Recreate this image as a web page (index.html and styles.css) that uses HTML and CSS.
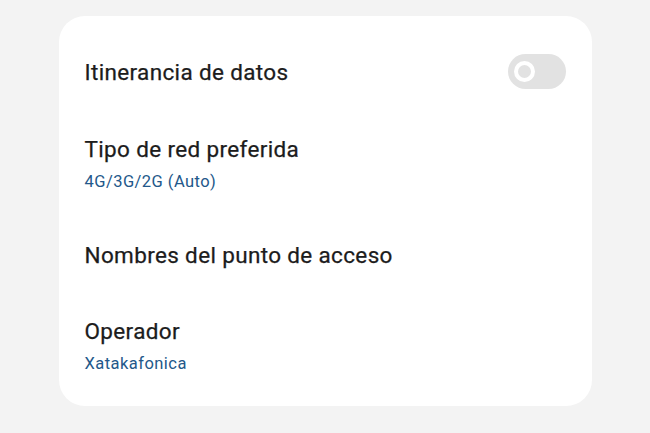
FILE: index.html
```html
<!DOCTYPE html>
<html lang="es">
<head>
    <meta charset="UTF-8">
    <meta name="viewport" content="width=device-width, initial-scale=1.0">
    <title>Ajustes de red móvil</title>
    <link rel="stylesheet" href="styles.css">
</head>
<body>
    <div class="card">
        <div class="row row-switch">
            <div class="title">Itinerancia de datos</div>
            <div class="switch"><span class="knob"></span></div>
        </div>
        <div class="row">
            <div class="title">Tipo de red preferida</div>
            <div class="sub">4G/3G/2G (Auto)</div>
        </div>
        <div class="row">
            <div class="title">Nombres del punto de acceso</div>
        </div>
        <div class="row">
            <div class="title">Operador</div>
            <div class="sub">Xatakafonica</div>
        </div>
    </div>
</body>
</html>
```

FILE: styles.css
```css
body {
    margin: 0;
    padding: 16px 0 0;
    background-color: #f3f3f3;
    font-family: Roboto, "Noto Sans", sans-serif;
}
.card {
    width: 533px;
    margin: 0 auto;
    box-sizing: border-box;
    background: #fff;
    border-radius: 26px;
    padding: 38px 26px 31px 26px;
    display: flex;
    flex-direction: column;
    gap: 46px;
}
.row {
    display: flex;
    flex-direction: column;
}
.row + .row + .row {
    margin-top: 2px;
}
.row-switch {
    flex-direction: row;
    justify-content: space-between;
    align-items: center;
}
.title {
    font-size: 22.5px;
    line-height: 28px;
    letter-spacing: 0.35px;
    color: #1c1c1c;
    -webkit-text-stroke: 0.25px #1c1c1c;
}
.sub {
    margin-top: 8px;
    font-size: 16.5px;
    line-height: 22px;
    letter-spacing: 0.45px;
    color: #23588a;
}
.switch {
    width: 58px;
    height: 35px;
    border-radius: 18px;
    background: #e2e2e2;
    display: flex;
    align-items: center;
    padding-left: 6px;
    box-sizing: border-box;
}
.knob {
    width: 21px;
    height: 21px;
    box-sizing: border-box;
    border-radius: 50%;
    border: 4px solid #fff;
    background: #e2e2e2;
}
```
